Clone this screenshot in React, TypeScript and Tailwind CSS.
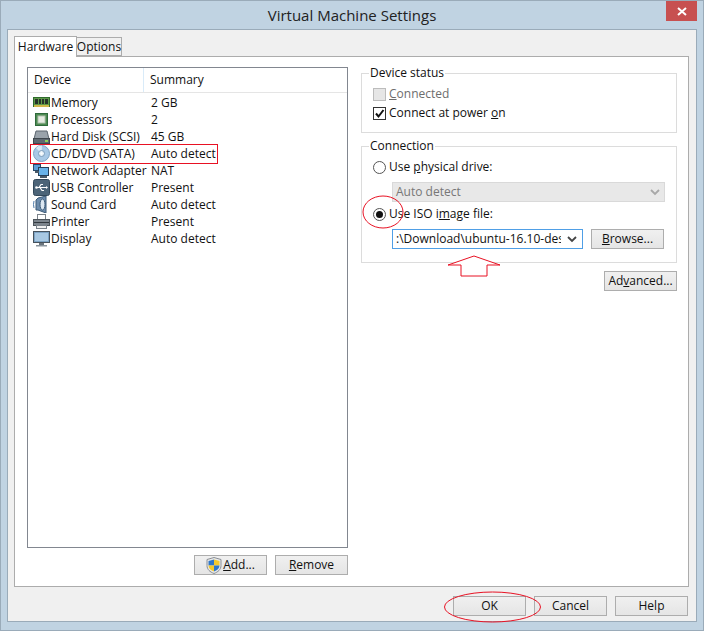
import React from "react";

const Icon = ({ kind }: { kind: string }) => {
  const c = "w-[17px] h-[17px] shrink-0";
  switch (kind) {
    case "memory":
      return (
        <svg className={c} viewBox="0 0 17 17">
          <rect x="0.5" y="3.5" width="16" height="9" fill="#5f9a4a" stroke="#2f6b2b" />
          <rect x="2" y="5" width="3" height="5" fill="#26342a" />
          <rect x="6" y="5" width="2" height="5" fill="#26342a" />
          <rect x="9" y="5" width="2" height="5" fill="#26342a" />
          <rect x="12" y="5" width="3" height="5" fill="#26342a" />
          <rect x="1" y="11" width="15" height="2" fill="#d0b84a" />
        </svg>
      );
    case "cpu":
      return (
        <svg className={c} viewBox="0 0 17 17">
          <rect x="2.5" y="2.5" width="12" height="12" fill="#4d8a52" stroke="#2e6a3a" />
          <rect x="5" y="5" width="7" height="7" fill="#e6ebe2" stroke="#b5c4b0" />
        </svg>
      );
    case "disk":
      return (
        <svg className={c} viewBox="0 0 17 17">
          <path d="M3 3h11l2 8H1z" fill="#9aa3ab" stroke="#5c6670" />
          <rect x="0.5" y="10.5" width="16" height="5" fill="#5e6870" stroke="#3f474e" />
          <rect x="12" y="12" width="3" height="2" fill="#8fd05a" />
        </svg>
      );
    case "cd":
      return (
        <svg className={c} viewBox="0 0 17 17">
          <circle cx="8.5" cy="8.5" r="8" fill="#a9c9e6" stroke="#7ea3c4" />
          <path d="M8.5 8.5L3 3a8 8 0 0 1 6-2.4z" fill="#dceaf6" />
          <circle cx="8.5" cy="8.5" r="3" fill="#e9f1f8" stroke="#7a9cbb" />
          <circle cx="8.5" cy="8.5" r="1" fill="#fff" />
        </svg>
      );
    case "net":
      return (
        <svg className={c} viewBox="0 0 17 17">
          <rect x="0.5" y="2.5" width="7" height="6" fill="#5c9ed8" stroke="#2a4a6a" />
          <rect x="5.5" y="5.5" width="10" height="8" fill="#69b3ea" stroke="#263f58" />
          <rect x="7" y="14" width="7" height="2" fill="#4a5a68" />
          <rect x="2" y="9" width="4" height="2" fill="#4a5a68" />
        </svg>
      );
    case "usb":
      return (
        <svg className={c} viewBox="0 0 17 17">
          <rect x="0.5" y="0.5" width="16" height="16" rx="2" fill="#4c6478" stroke="#33485a" />
          <path d="M3 8.5h10M6 8.5l2-3h2M7 8.5l2 3h2" stroke="#fff" strokeWidth="1.2" fill="none" />
          <path d="M13 7l2 1.5-2 1.5z" fill="#fff" />
          <circle cx="3.5" cy="8.5" r="1.3" fill="#fff" />
        </svg>
      );
    case "sound":
      return (
        <svg className={c} viewBox="0 0 17 17">
          <path d="M5 2l8-2v17l-8-3H3V4z" fill="#6d8cac" stroke="#3c5a78" />
          <ellipse cx="9.5" cy="8.5" rx="2.5" ry="5.5" fill="#dde8f2" stroke="#3c5a78" />
          <path d="M1 5q-1 3.5 0 7" stroke="#4a78a8" fill="none" />
        </svg>
      );
    case "printer":
      return (
        <svg className={c} viewBox="0 0 17 17">
          <rect x="4.5" y="1.5" width="8" height="5" fill="#fff" stroke="#7a828a" />
          <rect x="0.5" y="6.5" width="16" height="6" fill="#7d858d" stroke="#4d555c" />
          <rect x="1" y="9" width="15" height="1" fill="#33393f" />
          <rect x="3.5" y="12.5" width="10" height="3" fill="#f0f0f0" stroke="#7a828a" />
        </svg>
      );
    default:
      return (
        <svg className={c} viewBox="0 0 17 17">
          <rect x="0.5" y="1.5" width="16" height="11" fill="#7da3c4" stroke="#46525c" />
          <rect x="2" y="3" width="13" height="8" fill="#a8c8e2" />
          <rect x="6" y="13" width="5" height="2" fill="#6a747c" />
          <rect x="3" y="15" width="11" height="1.5" fill="#8a949c" />
        </svg>
      );
  }
};

const rows = [
  ["memory", "Memory", "2 GB"],
  ["cpu", "Processors", "2"],
  ["disk", "Hard Disk (SCSI)", "45 GB"],
  ["cd", "CD/DVD (SATA)", "Auto detect"],
  ["net", "Network Adapter", "NAT"],
  ["usb", "USB Controller", "Present"],
  ["sound", "Sound Card", "Auto detect"],
  ["printer", "Printer", "Present"],
  ["display", "Display", "Auto detect"],
];

const Btn = ({ children, className = "" }: { children: React.ReactNode; className?: string }) => (
  <button className={`h-[20px] w-[73px] border border-[#adadad] bg-gradient-to-b from-[#f0f0f0] to-[#e5e5e5] flex items-center justify-center text-[#111] ${className}`}>
    {children}
  </button>
);

const Chevron = ({ color }: { color: string }) => (
  <svg width="10" height="7" viewBox="0 0 10 7" className="shrink-0">
    <path d="M1 1l4 4 4-4" stroke={color} strokeWidth="1.8" fill="none" />
  </svg>
);

const Group = ({ title, className, children }: { title: string; className: string; children: React.ReactNode }) => (
  <div className={`relative border border-[#dcdcdc] pl-[11px] ${className}`}>
    <span className="absolute left-[7px] top-[-9px] bg-white px-px leading-[16px] text-[#111]">{title}</span>
    {children}
  </div>
);

const Radio = ({ checked }: { checked?: boolean }) => (
  <span className="w-[13px] h-[13px] rounded-full border border-[#555] bg-white flex items-center justify-center shrink-0">
    {checked && <span className="w-[7px] h-[7px] rounded-full bg-[#111]" />}
  </span>
);

export default function App() {
  return (
    <div className="relative w-[704px] h-[631px] overflow-hidden bg-[#c0d3e2] border border-[#9aabb9] flex flex-col px-[6px] pb-[8px] text-[12px] text-[#111] font-['Open_Sans',sans-serif]">
      <div className="h-[28px] shrink-0 flex items-center justify-center text-[15px] text-[#222]">Virtual Machine Settings</div>
      <div className="absolute right-[6px] top-0 w-[31px] h-[20px] bg-[#c75050] flex items-center justify-center">
        <svg width="10" height="9" viewBox="0 0 10 9">
          <path d="M1 1l8 7M9 1L1 8" stroke="#fff" strokeWidth="2" />
        </svg>
      </div>

      <div className="flex-1 flex flex-col bg-[#f0f0f0] border border-[#9aabb9] pl-[6px] pr-[8px] pt-[6px]">
        <div className="flex items-end h-[21px] relative z-10">
          <div className="w-[63px] h-[21px] bg-white border border-b-0 border-[#acacac] flex items-center justify-center">Hardware</div>
          <div className="w-[45px] h-[19px] mb-px bg-[#f0f0f0] border border-l-0 border-[#acacac] flex items-center justify-center">Options</div>
        </div>
        <div className="w-[675px] h-[531px] mt-[-1px] bg-white border border-[#acacac] flex pl-[12px] pt-[10px] gap-[13px]">
          <div className="w-[321px] flex flex-col">
            <div className="h-[481px] border border-[#828790] flex flex-col">
              <div className="flex h-[25px] border-b border-[#e5e5e5] items-center">
                <div className="w-[116px] h-full pl-[6px] flex items-center border-r border-[#d9ebf9]">Device</div>
                <div className="pl-[6px]">Summary</div>
              </div>
              <div className="pt-px">
                {rows.map(([k, a, b]) => (
                  <div key={a} className="flex h-[17px] items-center">
                    <div className="w-[117px] pl-[5px] flex items-center gap-px whitespace-nowrap">
                      <Icon kind={k} />
                      <span>{a}</span>
                    </div>
                    <div className="pl-[6px]">{b}</div>
                  </div>
                ))}
              </div>
            </div>
            <div className="flex justify-end gap-[8px] mt-[7px]">
              <Btn>
                <svg width="16" height="17" viewBox="0 0 16 17" className="mr-px">
                  <path d="M8 0.5l7 2v6c0 4-3 6.5-7 8-4-1.500-7-4-7-8v-6z" fill="#e9e9e9" stroke="#8a8f96" />
                  <path d="M8 2.500v6H2.500v-4.500z" fill="#2f77c9" />
                  <path d="M8 2.500l5.500 1.500v4.500H8z" fill="#f4c92c" />
                  <path d="M2.500 8.500H8v6c-3-1-5.500-3-5.500-6z" fill="#f4c92c" />
                  <path d="M8 8.500h5.500c0 3-2.500 5-5.500 6z" fill="#2f77c9" />
                </svg>
                <span><u>A</u>dd...</span>
              </Btn>
              <Btn><span><u>R</u>emove</span></Btn>
            </div>
          </div>

          <div className="w-[316px] pt-[6px] flex flex-col">
            <Group title="Device status" className="h-[60px] pt-[13px]">
              <div className="flex items-center gap-[3px] h-[14px] text-[#6d6d6d]">
                <span className="w-[13px] h-[13px] bg-[#e6e6e6] border border-[#bcbcbc]" />
                <span><u>C</u>onnected</span>
              </div>
              <div className="flex items-center gap-[3px] h-[14px] mt-[5px]">
                <span className="w-[13px] h-[13px] bg-white border border-[#333] flex items-center justify-center">
                  <svg width="11" height="11" viewBox="0 0 11 11">
                    <path d="M2 5.500l2.500 3L9.500 2" stroke="#111" strokeWidth="2" fill="none" />
                  </svg>
                </span>
                <span>Connect at power <u>o</u>n</span>
              </div>
            </Group>
            <Group title="Connection" className="h-[117px] mt-[13px] pt-[13px]">
              <div className="flex items-center gap-[3px] h-[14px]">
                <Radio />
                <span>Use <u>p</u>hysical drive:</span>
              </div>
              <div className="ml-[19px] mt-[8px] w-[273px] h-[20px] bg-[#e8e8e8] border border-[#d9d9d9] flex items-center justify-between pl-[3px] pr-[4px] text-[#777]">
                <span>Auto detect</span>
                <Chevron color="#a8a8a8" />
              </div>
              <div className="flex items-center gap-[3px] h-[14px] mt-[5px]">
                <Radio checked />
                <span>Use ISO i<u>m</u>age file:</span>
              </div>
              <div className="flex ml-[19px] mt-[8px] gap-[8px]">
                <div className="w-[191px] h-[20px] bg-white border border-[#4f9fe6] flex items-center justify-between pl-[3px] pr-[5px]">
                  <span className="w-[165px] overflow-hidden whitespace-nowrap">:\Download\ubuntu-16.10-desktop</span>
                  <Chevron color="#444" />
                </div>
                <Btn className="border-[#4f9fe6]"><span><u>B</u>rowse...</span></Btn>
              </div>
            </Group>
            <div className="flex justify-end mt-[8px]">
              <Btn><span>Ad<u>v</u>anced...</span></Btn>
            </div>
          </div>
        </div>
        <div className="flex justify-end gap-[8px] pt-[9px] pr-[-1px]">
          <Btn>OK</Btn>
          <Btn>Cancel</Btn>
          <Btn>Help</Btn>
        </div>
      </div>

      {/* Red annotations lying over the dialog (coordinates relative to the bordered root) */}
      <div className="absolute left-[29px] top-[143px] w-[188px] h-[20px] border border-[#e81123] pointer-events-none" />
      <svg className="absolute left-0 top-0 pointer-events-none" width="702" height="629" viewBox="1 1 702 629" fill="none" stroke="#e81123">
        <ellipse cx="383" cy="212" rx="20" ry="16" />
        <ellipse cx="492.500" cy="607" rx="48" ry="15" />
        <path d="M448 265L474 256L500 265H487V276H461V265Z" fill="#fff" />
      </svg>
    </div>
  );
}
